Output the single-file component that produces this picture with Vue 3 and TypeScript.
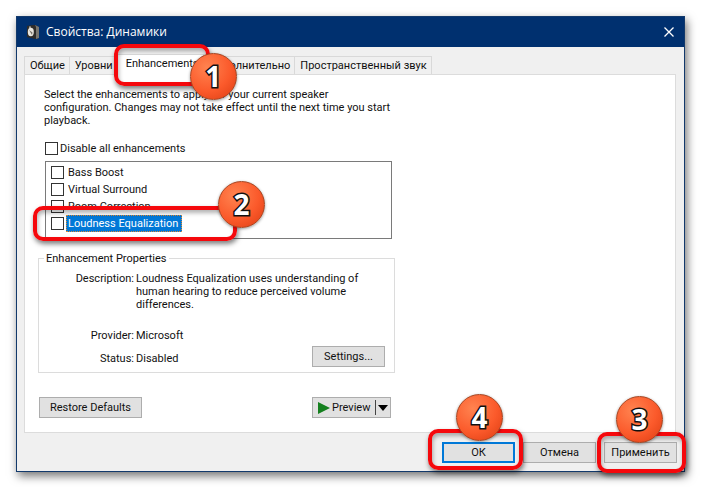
<script setup lang="ts">
import { ref } from 'vue'

interface Tab {
  id: string
  label: string
}

interface Enhancement {
  id: string
  label: string
  on: boolean
}

const tabs: Tab[] = [
  { id: 'general', label: 'Общие' },
  { id: 'levels', label: 'Уровни' },
  { id: 'enhancements', label: 'Enhancements' },
  { id: 'advanced', label: 'Дополнительно' },
  { id: 'spatial', label: 'Пространственный звук' },
]
const activeTab = ref<string>('enhancements')

const enhancements = ref<Enhancement[]>([
  { id: 'bass', label: 'Bass Boost', on: false },
  { id: 'surround', label: 'Virtual Surround', on: false },
  { id: 'room', label: 'Room Correction', on: false },
  { id: 'loudness', label: 'Loudness Equalization', on: false },
])
const selected = ref<string>('loudness')
const disableAll = ref<boolean>(false)
</script>

<template>
  <main class="stage">
    <section class="window" aria-labelledby="window-title">
      <header class="titlebar">
        <svg class="app-icon" viewBox="0 0 14 16" aria-hidden="true">
          <path d="M1 2 9 1 13 3 13 14 10 15 1 13Z" fill="#2b2b2b" />
          <path d="M9 1 13 3 13 14 10 15Z" fill="#77756f" />
          <path d="M1 2 9 1 10 3 10 15 1 13Z" fill="#2e2c2a" />
          <ellipse cx="4.8" cy="8" rx="3" ry="4.2" fill="#e9e6df" />
          <path d="M3 6 6.5 8.5 6 11Z" fill="#77736b" />
          <circle cx="4" cy="3.2" r="0.9" fill="#c9c5bd" />
        </svg>
        <h1 id="window-title">Свойства: Динамики</h1>
        <button class="close" type="button" aria-label="Закрыть">
          <svg viewBox="0 0 10 10" aria-hidden="true">
            <path d="M0.5 0.5 9.5 9.5M9.5 0.5 0.5 9.5" stroke="#fff" stroke-width="1.3" fill="none" />
          </svg>
        </button>
      </header>

      <div class="body">
        <div class="tabs" role="tablist">
          <div v-for="tab in tabs" :key="tab.id" class="tab-slot">
            <button
              class="tab"
              :class="{ active: tab.id === activeTab }"
              type="button"
              role="tab"
              :aria-selected="tab.id === activeTab"
              @click="activeTab = tab.id"
            >{{ tab.label }}</button>
            <template v-if="tab.id === 'enhancements'">
              <span class="frame frame-tab"></span>
              <span class="badge badge-tab">1</span>
            </template>
          </div>
        </div>

        <div class="page" role="tabpanel">
          <div class="column">
            <p class="intro">
              Select the enhancements to apply for your current speaker<br />
              configuration. Changes may not take effect until the next time you start<br />
              playback.
            </p>
            <label class="check all"><input v-model="disableAll" type="checkbox" />Disable all enhancements</label>

            <ul class="list">
              <li v-for="item in enhancements" :key="item.id" @click="selected = item.id">
                <label class="check row">
                  <input v-model="item.on" type="checkbox" />
                  <span class="name" :class="{ selected: item.id === selected }">{{ item.label }}</span>
                </label>
                <template v-if="item.id === 'loudness'">
                  <span class="frame frame-row"></span>
                  <span class="badge badge-row">2</span>
                </template>
              </li>
            </ul>

            <fieldset class="group">
              <legend>Enhancement Properties</legend>
              <dl class="props">
                <dt>Description:</dt>
                <dd class="desc">
                  Loudness Equalization uses understanding of<br />
                  human hearing to reduce perceived volume<br />
                  differences.
                </dd>
                <dt>Provider:</dt>
                <dd>Microsoft</dd>
                <dt>Status:</dt>
                <dd>Disabled</dd>
              </dl>
              <button class="btn settings" type="button">Settings...</button>
            </fieldset>

            <div class="actions">
              <button class="btn restore" type="button">Restore Defaults</button>
              <div class="split">
                <button class="split-main" type="button">
                  <svg class="play" viewBox="0 0 12 12" aria-hidden="true"><path d="M0 0 12 6 0 12Z" fill="#15801f" /></svg>
                  Preview
                </button>
                <button class="split-more" type="button" aria-label="Preview options">
                  <svg viewBox="0 0 10 6" aria-hidden="true"><path d="M0 0H10L5 6Z" fill="#000" /></svg>
                </button>
              </div>
            </div>
          </div>
        </div>

        <footer class="footer">
          <div class="slot">
            <button class="btn dialog primary" type="button">ОК</button>
            <span class="frame frame-ok"></span>
            <span class="badge badge-ok">4</span>
          </div>
          <div class="slot">
            <button class="btn dialog" type="button">Отмена</button>
          </div>
          <div class="slot">
            <button class="btn dialog" type="button">Применить</button>
            <span class="frame frame-apply"></span>
            <span class="badge badge-apply">3</span>
          </div>
        </footer>
      </div>
    </section>
  </main>
</template>

<style>
body {
  margin: 0;
  background: #fff;
}
</style>

<style scoped>
* {
  box-sizing: border-box;
}

.stage {
  padding: 16px;
  color: #111;
  font-family: Roboto, "Noto Sans", sans-serif;
  font-size: 11px;
  line-height: 13px;
}

button {
  margin: 0;
  padding: 0;
  font: inherit;
  color: inherit;
  white-space: nowrap;
}

.window {
  border: 1px solid #12396b;
  background: #f0f0f0;
  box-shadow: 2px 4px 9px rgba(0, 0, 0, 0.55);
}

.titlebar {
  display: flex;
  align-items: center;
  height: 30px;
  padding: 0 10px 0 9px;
  background: #00306f;
  color: #fff;
}

.app-icon {
  width: 14px;
  height: 16px;
}

h1 {
  flex: 1;
  margin: 0 0 0 6px;
  font-family: "Open Sans", "Noto Sans", sans-serif;
  font-size: 12px;
  font-weight: 400;
  line-height: 16px;
}

.close {
  display: flex;
  border: 0;
  background: none;
}

.close svg {
  width: 10px;
  height: 10px;
}

.body {
  padding: 7px 7px 8px;
}

.tabs {
  display: flex;
  align-items: flex-end;
  height: 20px;
}

.tab-slot {
  position: relative;
}

.tab {
  display: block;
  height: 18px;
  padding: 0 4px 0 5px;
  border: 1px solid #d9d9d9;
  border-bottom: 0;
  border-left: 0;
  background: #f0f0f0;
}

.tab-slot:first-child .tab {
  border-left: 1px solid #d9d9d9;
}

.tab.active {
  height: 21px;
  margin-bottom: -1px;
  padding: 0 4px 4px 8px;
  position: relative;
  background: #fff;
}

.page {
  margin-right: 1px;
  padding: 13px 13px 14px;
  border: 1px solid #dcdcdc;
  background: #fff;
}

.column {
  width: 357px;
}

.intro {
  margin: 0 0 15px 6px;
  white-space: nowrap;
}

.check {
  display: flex;
  align-items: center;
}

.check input {
  appearance: none;
  width: 13px;
  height: 13px;
  margin: 0;
  border: 1px solid #333;
  background: #fff;
}

.check input:checked {
  background: #0078d7;
}

.all {
  gap: 2px;
  margin: 0 0 6px 7px;
}

.list {
  height: 78px;
  margin: 0 3px 13px 7px;
  padding: 2px 5px;
  border: 1px solid #7a7a7a;
  list-style: none;
}

.list li {
  position: relative;
}

.row {
  height: 17px;
  gap: 2px;
}

.name {
  padding: 1px 3px 1px 1px;
  border: 1px solid transparent;
}

.name.selected {
  border: 1px dotted #e08a30;
  background: #0078d7;
  color: #fff;
}

.group {
  position: relative;
  min-width: 0;
  margin: 0;
  padding: 7px 9px 5px;
  border: 1px solid #dcdcdc;
}

legend {
  margin-left: -4px;
  padding: 0 2px;
}

.props {
  display: grid;
  grid-template-columns: 86px 1fr;
  column-gap: 2px;
  margin: 0;
  white-space: nowrap;
}

.props dt {
  text-align: right;
}

.props dd {
  margin: 0 0 10px;
}

.props .desc {
  margin-bottom: 18px;
}

.props dd:last-child {
  margin-bottom: 0;
}

.btn {
  height: 21px;
  border: 1px solid #adadad;
  background: #e1e1e1;
}

.settings {
  display: block;
  width: 73px;
  margin: -19px 0 0 auto;
}

.actions {
  display: flex;
  justify-content: space-between;
  margin-top: 24px;
  padding: 0 4px 0 1px;
}

.restore {
  width: 103px;
}

.split {
  display: flex;
  align-items: center;
  width: 79px;
  height: 21px;
  border: 1px solid #adadad;
  background: #e1e1e1;
}

.split button {
  display: flex;
  align-items: center;
  border: 0;
  background: none;
}

.split .split-main {
  flex: 1;
  gap: 2px;
  padding-left: 5px;
}

.play {
  width: 12px;
  height: 12px;
}

.split .split-more {
  height: 15px;
  padding: 0 2px;
  border-left: 1px solid #444;
}

.split-more svg {
  width: 10px;
  height: 6px;
}

.footer {
  display: flex;
  justify-content: flex-end;
  gap: 8px;
  padding-top: 9px;
}

.slot {
  position: relative;
}

.dialog {
  display: block;
  width: 73px;
}

.primary {
  border: 2px solid #0078d7;
}

.frame {
  position: absolute;
  z-index: 2;
  border: 4px solid #f5080c;
  border-radius: 10px;
  box-shadow: 1px 3px 5px rgba(0, 0, 0, 0.5), inset 1px 3px 4px rgba(0, 0, 0, 0.3);
  pointer-events: none;
}

.badge {
  position: absolute;
  z-index: 3;
  width: 47px;
  height: 47px;
  border: 1px solid #a5431f;
  border-radius: 50%;
  background: radial-gradient(circle at 35% 30%, #ff8350, #fb5a2b 55%, #dc3c12);
  box-shadow: 0 1px 3px rgba(0, 0, 0, 0.4);
  color: #fff;
  font-family: "Noto Sans", "Open Sans", sans-serif;
  font-size: 28px;
  font-weight: 700;
  line-height: 44px;
  text-align: center;
  -webkit-text-stroke: 3px #111;
  paint-order: stroke fill;
  pointer-events: none;
}

.frame-tab {
  top: -10px;
  left: -4px;
  width: 96px;
  height: 42px;
}

.badge-tab {
  top: -1px;
  left: 72px;
}

.frame-row {
  top: -9px;
  left: -18px;
  width: 204px;
  height: 35px;
}

.badge-row {
  top: -34px;
  left: 167px;
}

.frame-ok {
  top: -13px;
  left: -14px;
  width: 95px;
  height: 41px;
}

.badge-ok {
  top: -48px;
  left: 14px;
}

.frame-apply {
  top: -10px;
  left: -7px;
  width: 89px;
  height: 41px;
}

.badge-apply {
  top: -46px;
  left: 12px;
}
</style>
